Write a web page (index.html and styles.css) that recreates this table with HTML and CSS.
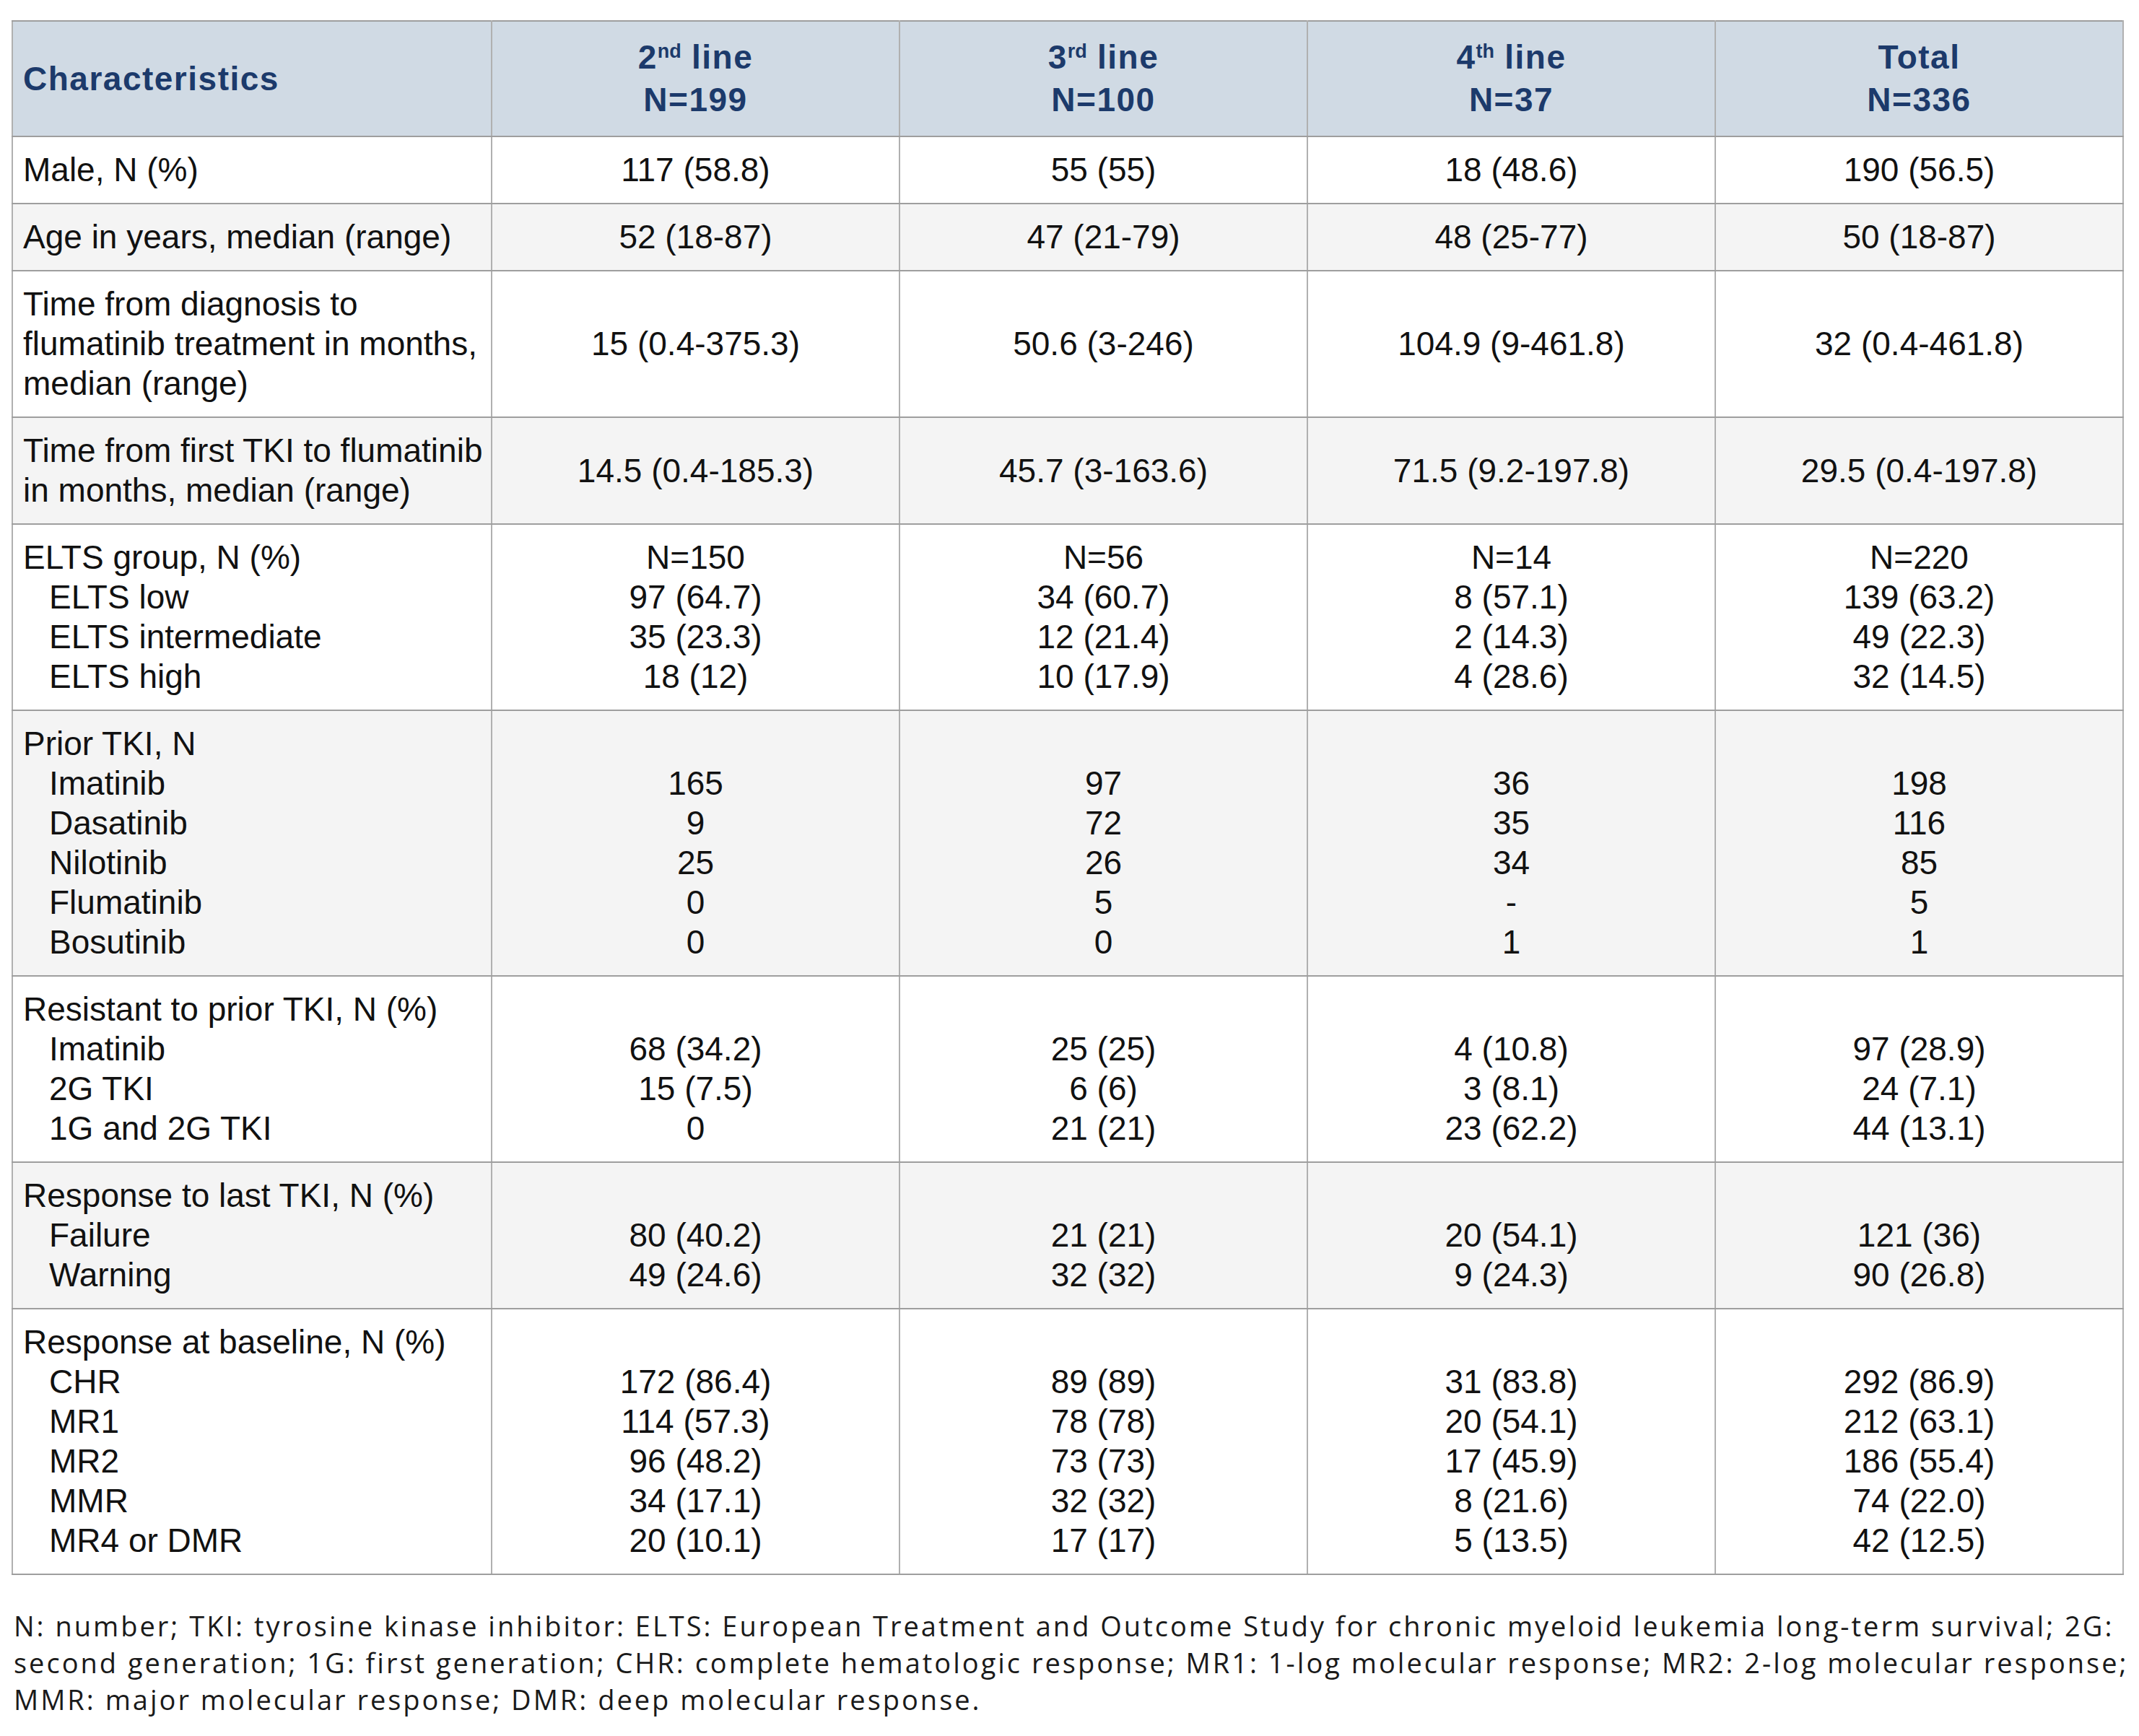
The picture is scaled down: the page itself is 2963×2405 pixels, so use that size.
FILE: index.html
```html
<!DOCTYPE html>
<html lang="en">
<head>
<meta charset="utf-8">
<title>Baseline characteristics</title>
<link rel="stylesheet" href="styles.css">
</head>
<body>
<div class="page">
  <table class="tbl">
    <colgroup>
      <col class="c-label">
      <col class="c-val">
      <col class="c-val">
      <col class="c-val">
      <col class="c-val">
    </colgroup>
    <thead>
      <tr>
        <th class="lbl">Characteristics</th>
        <th>2<sup>nd</sup> line<br>N=199</th>
        <th>3<sup>rd</sup> line<br>N=100</th>
        <th>4<sup>th</sup> line<br>N=37</th>
        <th>Total<br>N=336</th>
      </tr>
    </thead>
    <tbody>
      <tr>
        <td class="lbl">Male, N (%)</td>
        <td>117 (58.8)</td><td>55 (55)</td><td>18 (48.6)</td><td>190 (56.5)</td>
      </tr>
      <tr class="alt">
        <td class="lbl">Age in years, median (range)</td>
        <td>52 (18-87)</td><td>47 (21-79)</td><td>48 (25-77)</td><td>50 (18-87)</td>
      </tr>
      <tr>
        <td class="lbl">Time from diagnosis to<br>flumatinib treatment in months,<br>median (range)</td>
        <td>15 (0.4-375.3)</td><td>50.6 (3-246)</td><td>104.9 (9-461.8)</td><td>32 (0.4-461.8)</td>
      </tr>
      <tr class="alt">
        <td class="lbl">Time from first TKI to flumatinib<br>in months, median (range)</td>
        <td>14.5 (0.4-185.3)</td><td>45.7 (3-163.6)</td><td>71.5 (9.2-197.8)</td><td>29.5 (0.4-197.8)</td>
      </tr>
      <tr>
        <td class="lbl">ELTS group, N (%)<span class="sub">ELTS low</span><span class="sub">ELTS intermediate</span><span class="sub">ELTS high</span></td>
        <td>N=150<br>97 (64.7)<br>35 (23.3)<br>18 (12)</td>
        <td>N=56<br>34 (60.7)<br>12 (21.4)<br>10 (17.9)</td>
        <td>N=14<br>8 (57.1)<br>2 (14.3)<br>4 (28.6)</td>
        <td>N=220<br>139 (63.2)<br>49 (22.3)<br>32 (14.5)</td>
      </tr>
      <tr class="alt">
        <td class="lbl">Prior TKI, N<span class="sub">Imatinib</span><span class="sub">Dasatinib</span><span class="sub">Nilotinib</span><span class="sub">Flumatinib</span><span class="sub">Bosutinib</span></td>
        <td>&nbsp;<br>165<br>9<br>25<br>0<br>0</td>
        <td>&nbsp;<br>97<br>72<br>26<br>5<br>0</td>
        <td>&nbsp;<br>36<br>35<br>34<br>-<br>1</td>
        <td>&nbsp;<br>198<br>116<br>85<br>5<br>1</td>
      </tr>
      <tr>
        <td class="lbl">Resistant to prior TKI, N (%)<span class="sub">Imatinib</span><span class="sub">2G TKI</span><span class="sub">1G and 2G TKI</span></td>
        <td>&nbsp;<br>68 (34.2)<br>15 (7.5)<br>0</td>
        <td>&nbsp;<br>25 (25)<br>6 (6)<br>21 (21)</td>
        <td>&nbsp;<br>4 (10.8)<br>3 (8.1)<br>23 (62.2)</td>
        <td>&nbsp;<br>97 (28.9)<br>24 (7.1)<br>44 (13.1)</td>
      </tr>
      <tr class="alt">
        <td class="lbl">Response to last TKI, N (%)<span class="sub">Failure</span><span class="sub">Warning</span></td>
        <td>&nbsp;<br>80 (40.2)<br>49 (24.6)</td>
        <td>&nbsp;<br>21 (21)<br>32 (32)</td>
        <td>&nbsp;<br>20 (54.1)<br>9 (24.3)</td>
        <td>&nbsp;<br>121 (36)<br>90 (26.8)</td>
      </tr>
      <tr>
        <td class="lbl">Response at baseline, N (%)<span class="sub">CHR</span><span class="sub">MR1</span><span class="sub">MR2</span><span class="sub">MMR</span><span class="sub">MR4 or DMR</span></td>
        <td>&nbsp;<br>172 (86.4)<br>114 (57.3)<br>96 (48.2)<br>34 (17.1)<br>20 (10.1)</td>
        <td>&nbsp;<br>89 (89)<br>78 (78)<br>73 (73)<br>32 (32)<br>17 (17)</td>
        <td>&nbsp;<br>31 (83.8)<br>20 (54.1)<br>17 (45.9)<br>8 (21.6)<br>5 (13.5)</td>
        <td>&nbsp;<br>292 (86.9)<br>212 (63.1)<br>186 (55.4)<br>74 (22.0)<br>42 (12.5)</td>
      </tr>
    </tbody>
  </table>
  <p class="note">N: number; TKI: tyrosine kinase inhibitor: ELTS: European Treatment and Outcome Study for chronic myeloid leukemia long-term survival; 2G:<br>second generation; 1G: first generation; CHR: complete hematologic response; MR1: 1-log molecular response; MR2: 2-log molecular response;<br>MMR: major molecular response; DMR: deep molecular response.</p>
</div>
</body>
</html>
```

FILE: styles.css
```css
html, body {
  margin: 0;
  padding: 0;
  background: #ffffff;
}

.page {
  padding: 28px 0 0 16px;
  width: 2926px;
}

.tbl {
  width: 2926px;
  table-layout: fixed;
  border-collapse: collapse;
  font-family: "Liberation Sans", Arial, sans-serif;
  font-size: 46px;
  line-height: 55px;
  color: #111111;
}

.c-label { width: 664px; }
.c-val { width: 565px; }

.tbl th,
.tbl td {
  border-top: 2px solid #9e9e9e;
  border-bottom: 2px solid #9e9e9e;
  border-left: 2px solid #b0b0b0;
  border-right: 2px solid #b0b0b0;
  padding: 18px 10px;
  text-align: center;
  vertical-align: middle;
  font-weight: normal;
}

.tbl thead th {
  background: #d0dae4;
  color: #1c3a6b;
  font-weight: bold;
  font-size: 46px;
  line-height: 59px;
  letter-spacing: 1.5px;
  padding: 20px 10px;
}

.tbl th.lbl,
.tbl td.lbl {
  text-align: left;
  padding-left: 14px;
  padding-right: 4px;
}

.tbl sup {
  font-size: 27px;
  line-height: 0;
  vertical-align: 15px;
  letter-spacing: 0;
}

.tbl tr.alt td {
  background: #f4f4f4;
}

.sub {
  display: block;
  padding-left: 36px;
}

.note {
  margin: 45px 0 0 3px;
  font-family: "Open Sans", "Liberation Sans", sans-serif;
  font-size: 38px;
  line-height: 51px;
  letter-spacing: 3px;
  color: #1a1a1a;
  white-space: nowrap;
}
```
